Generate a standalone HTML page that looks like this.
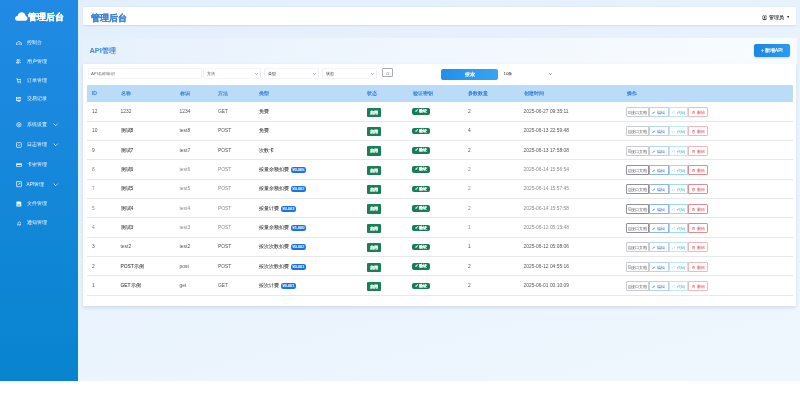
<!DOCTYPE html>
<html><head><meta charset="utf-8">
<style>
*{box-sizing:border-box;margin:0;padding:0}
html,body{width:800px;height:407px;overflow:hidden;background:#fff;font-family:"Liberation Sans",sans-serif;color:#333}
#app{will-change:transform;position:absolute;left:0;top:0;width:800px;height:381px;background:linear-gradient(165deg,#e2eefb 0%,#e9f3fd 50%,#eff7fe 100%)}
#side{position:absolute;left:0;top:0;width:78px;height:381px;background:linear-gradient(180deg,#218ae4,#0884cf)}
.logo{position:absolute;left:14px;top:11px;color:#fff;font-weight:bold;-webkit-text-stroke:.25px #fff;font-size:8.6px;line-height:12px;white-space:nowrap}
.logo svg{position:absolute;left:1px;top:1px}
.logo span{position:absolute;left:13.8px;top:-.3px}
.mi{position:absolute;left:15px;height:10px;color:rgba(255,255,255,.95);font-size:4.8px;line-height:10px;white-space:nowrap}
.mi svg{position:absolute;left:0;top:2px}
.mi span{position:absolute;left:11.5px;top:0}
.mi .chev{position:absolute;left:38.4px;top:3.4px}
#hdr{position:absolute;left:83px;top:6.8px;width:713px;height:18px;background:#fff;border-radius:1px;box-shadow:0 .5px 1.5px rgba(30,80,160,.12)}
#hdr .t{position:absolute;left:8px;top:4.8px;font-size:9px;line-height:12px;font-weight:bold;color:#3f84dc;-webkit-text-stroke:.2px #3f84dc;white-space:nowrap}
#hdr .u{position:absolute;left:686px;top:6.9px;font-size:4.9px;line-height:8px;color:#444;-webkit-text-stroke:.15px #555;white-space:nowrap}
#card{position:absolute;left:82px;top:38px;width:715px;height:268px;}
#card .cb{position:absolute;left:.7px;top:25.7px;width:713.6px;height:242.2px;background:#fff;border-radius:0 0 1px 1px;box-shadow:0 1.5px 3.5px rgba(40,70,120,.13)}
#card .ch{position:absolute;left:0;top:0;width:715px;height:25.7px;background:linear-gradient(90deg,rgba(240,248,255,.2),rgba(255,255,255,.75));border-radius:2px 2px 0 0}
#card .ch .t{position:absolute;left:7.4px;top:8px;font-size:7.45px;line-height:10px;font-weight:bold;color:#4588dc;white-space:nowrap}
.addbtn{position:absolute;left:671.6px;top:6.2px;width:36.5px;height:12.4px;padding-top:.8px;border-radius:2px;background:linear-gradient(90deg,#1d86e0,#2a9bf0);box-shadow:0 1px 2px rgba(33,150,243,.3);color:#fff;-webkit-text-stroke:.15px #fff;font-size:4.7px;line-height:11.6px;text-align:center;white-space:nowrap}
.fi{position:absolute;top:30px;height:11px;border:.5px solid #eef0f3;border-top-color:#f5f6f8;border-bottom-color:#f5f6f8;border-radius:1.5px;background:#fff;font-size:4.4px;line-height:10px;color:#333;padding-left:2.5px;white-space:nowrap}
.fi .car{position:absolute;right:2.2px;top:4.2px;width:3px;height:2px}
.sbtn{position:absolute;left:359px;top:30.6px;width:57px;height:11.2px;border-radius:2px;background:linear-gradient(90deg,#2290e8,#38a4f1);color:#fff;-webkit-text-stroke:.15px #fff;font-size:4.6px;line-height:11px;text-align:center}
#tbl{position:absolute;left:5px;top:47px;width:705.5px}
.th{position:absolute;left:0;top:0;width:705.5px;height:17px;background:#bbdcf9;border-radius:1px 1px 0 0}
.th span{position:absolute;top:4.8px;font-size:4.9px;line-height:8px;color:#1f74d0;-webkit-text-stroke:.12px #1f74d0;white-space:nowrap}
.row{position:absolute;left:0;width:705.5px;height:19.35px;border-bottom:.6px solid #e6e8ea}
.row span{position:absolute;top:5.5px;font-size:4.9px;line-height:8px;color:#333;white-space:nowrap}
.row span{color:#2a2a2a;-webkit-text-stroke:.04px #333}
.row span.l{color:#555;-webkit-text-stroke:0}
.row.g span.l{color:#8a8a8a}
.st{position:absolute;left:280px;top:5.4px;width:14.2px;height:9.1px;background:#187f56;border-radius:1px;color:#fff;-webkit-text-stroke:.1px #fff;font-size:4.3px;line-height:9.1px;text-align:center}
.kp{position:absolute;left:325.2px;top:6.1px;width:17.4px;height:6.5px;background:#177d54;border-radius:2px;color:#fff;-webkit-text-stroke:.1px #fff;font-size:3.5px;line-height:6.5px;text-align:center}
.pr{display:inline-block;margin-left:1.6px;padding:0 1.9px;height:6px;line-height:6px;background:#1a74e8;border-radius:2.2px;color:#fff;-webkit-text-stroke:.12px #fff;font-size:3.9px;vertical-align:top;position:relative;top:1px}
.acts{position:absolute;left:539px;top:4.7px;height:10px;white-space:nowrap;font-size:0}
.ab{display:inline-block;font-style:normal;height:10px;border:.5px solid;font-size:4.3px;line-height:9px;text-align:center;vertical-align:top}
.ab1{width:23px;border-color:#c9ccd0;color:#555;border-radius:1px 0 0 1px}
.ab2{width:19.5px;border-color:#b9d3f2;color:#2b72d4}
.ab3{width:19.8px;border-color:#bfe9f3;color:#2ab3d3}
.ab4{width:20.2px;border-color:#f1b9bd;color:#d63b48;border-radius:0 1px 1px 0}
.pr{font-style:normal}
.row.g .ab1{border-color:#8e9297}
.row.g .ab2{border-color:#8fb6ea}
.row.g .ab3{border-color:#9fdcec}
.row.g .ab4{border-color:#e48a92}
.ab svg{vertical-align:middle;position:relative;top:-.3px;margin-right:.3px}
</style></head><body>
<div id="app">
<div id="side">
 <div class="logo"><svg width="12.5" height="9" viewBox="0 0 25 18"><path d="M5 17.5 C1.5 17.5 0 15 0 12.5 C0 9.5 2.5 7.5 5 7.8 C6 3 10 0.5 13.5 0.5 C18 0.5 21 4 21.2 8 C23.5 8.5 25 10.5 25 13 C25 15.5 23 17.5 20.5 17.5 Z" fill="#fff"/></svg><span>管理后台</span></div>
<div class="mi" style="top:38.0px"><svg style="left:0.8px;top:2.70px" width="6" height="4.6" viewBox="0 0 12 9.2"><path d="M1.8 8.4 A4.8 4.8 0 1 1 10.2 8.4 Z" fill="none" stroke="#fff" stroke-width="1.5"/><path d="M6 7 L8 4.2" stroke="#fff" stroke-width="1.4"/></svg><span>控制台</span></div>
<div class="mi" style="top:56.6px"><svg style="left:0.7px;top:2.90px" width="5" height="4.2" viewBox="0 0 10 8.4"><circle cx="3.5" cy="2.4" r="1.8" fill="none" stroke="#fff" stroke-width="1.6"/><path d="M.8 8 C.8 5 6.2 5 6.2 8 Z" fill="none" stroke="#fff" stroke-width="1.6"/><path d="M6.8 .6 A1.8 1.8 0 0 1 6.8 4 M8 5.2 C9.2 5.8 9.4 7 9.4 8" fill="none" stroke="#fff" stroke-width="1.5"/></svg><span>用户管理</span></div>
<div class="mi" style="top:75.8px"><svg style="left:0.9px;top:2.20px" width="5.4" height="5.6" viewBox="0 0 11 11"><path d="M.8 1 H2.5 L3.5 7.5 H9.5 L10.3 2.8 H2.8" fill="none" stroke="#fff" stroke-width="1.4"/><circle cx="4.2" cy="9.6" r="1.1" fill="#fff"/><circle cx="8.8" cy="9.6" r="1.1" fill="#fff"/></svg><span>订单管理</span></div>
<div class="mi" style="top:94.3px"><svg style="left:0.9px;top:2.50px" width="5.6" height="5" viewBox="0 0 11 10"><rect x=".8" y=".8" width="9.4" height="6" fill="none" stroke="#fff" stroke-width="1.4"/><path d="M.8 3.5 H10.2" stroke="#fff" stroke-width="1.3"/><path d="M4 6.8 V9.3 H7 V6.8" fill="none" stroke="#fff" stroke-width="1.3"/></svg><span>交易记录</span></div>
<div class="mi" style="top:120.1px"><svg style="left:0.8px;top:2.30px" width="5.8" height="5.4" viewBox="0 0 12 11"><circle cx="6" cy="5.5" r="4.6" fill="none" stroke="#fff" stroke-width="1.3"/><circle cx="6" cy="5.5" r="1.8" fill="none" stroke="#fff" stroke-width="1.3"/></svg><span>系统设置</span><svg class="chev" width="5.4" height="3.4" viewBox="0 0 12 7.5"><path d="M1.2 1.2 L6 6 L10.8 1.2" fill="none" stroke="#fff" stroke-width="1.4"/></svg></div>
<div class="mi" style="top:139.8px"><svg style="left:0.8px;top:2.00px" width="5.8" height="6" viewBox="0 0 12 12"><rect x="1" y="1" width="10" height="10" rx="1.5" fill="none" stroke="#fff" stroke-width="1.4"/><path d="M3.5 5 L6 7.5 L8.5 5" fill="none" stroke="#fff" stroke-width="1.3"/></svg><span>日志管理</span><svg class="chev" width="5.4" height="3.4" viewBox="0 0 12 7.5"><path d="M1.2 1.2 L6 6 L10.8 1.2" fill="none" stroke="#fff" stroke-width="1.4"/></svg></div>
<div class="mi" style="top:159.9px"><svg style="left:0.8px;top:3.00px" width="6" height="4" viewBox="0 0 12 8"><rect x=".8" y=".8" width="10.4" height="6.4" rx=".8" fill="none" stroke="#fff" stroke-width="1.4"/><path d="M.8 3 H11.2" stroke="#fff" stroke-width="1.8"/></svg><span>卡密管理</span></div>
<div class="mi" style="top:179.6px"><svg style="left:0.8px;top:1.90px" width="6" height="6.2" viewBox="0 0 12 12.4"><rect x="1" y="1" width="10" height="10.4" rx=".8" fill="none" stroke="#fff" stroke-width="1.3"/><path d="M3.5 8.5 L8 4 M5 4 H8 V7" fill="none" stroke="#fff" stroke-width="1.1"/></svg><span>API管理</span><svg class="chev" width="5.4" height="3.4" viewBox="0 0 12 7.5"><path d="M1.2 1.2 L6 6 L10.8 1.2" fill="none" stroke="#fff" stroke-width="1.4"/></svg></div>
<div class="mi" style="top:199.0px"><svg style="left:0.8px;top:2.00px" width="5.8" height="6" viewBox="0 0 12 12"><path d="M1 1 H9 L11 3 V11 H1 Z" fill="#fff"/><path d="M3 7 H9 M3 9 H9" stroke="#2a8fe0" stroke-width="1.1"/></svg><span>文件管理</span></div>
<div class="mi" style="top:218.2px"><svg style="left:1.5px;top:2.40px" width="4.8" height="5.2" viewBox="0 0 10 11"><path d="M2 8 V5 A3 3 0 0 1 8 5 V8 H9 H1 Z" fill="none" stroke="#fff" stroke-width="1.3"/><path d="M4 10.2 H6" stroke="#fff" stroke-width="1.3"/></svg><span>通知管理</span></div>
</div>
<div id="hdr"><div class="t">管理后台</div><svg style="position:absolute;left:679.3px;top:7.9px" width="5.2" height="5.2" viewBox="0 0 10 10"><circle cx="5" cy="5" r="4.6" fill="#fff" stroke="#222" stroke-width=".9"/><circle cx="5" cy="3.9" r="1.7" fill="#222"/><path d="M1.8 8.2 C2.5 6.3 7.5 6.3 8.2 8.2 C7 9.6 3 9.6 1.8 8.2Z" fill="#222"/></svg><div class="u">管理员</div><svg style="position:absolute;left:703.6px;top:9.3px" width="2.6" height="2" viewBox="0 0 4 3"><path d="M0 0H4L2 3Z" fill="#333"/></svg></div>
<div id="card">
 <div class="cb"></div>
 <div class="ch"><div class="t">API管理</div><div class="addbtn">+ 新增API</div></div>
 <div class="fi" style="left:5.5px;width:114.5px;border-color:#f3f4f6;color:#666;font-size:4.3px">API名称/标识</div>
 <div class="fi" style="left:121px;width:58px">方法<svg class="car" viewBox="0 0 6 4"><path d="M.6 .6 L3 3 L5.4 .6" fill="none" stroke="#444" stroke-width="1"/></svg></div>
 <div class="fi" style="left:182px;width:55px">类型<svg class="car" viewBox="0 0 6 4"><path d="M.6 .6 L3 3 L5.4 .6" fill="none" stroke="#444" stroke-width="1"/></svg></div>
 <div class="fi" style="left:240px;width:55px">状态<svg class="car" viewBox="0 0 6 4"><path d="M.6 .6 L3 3 L5.4 .6" fill="none" stroke="#444" stroke-width="1"/></svg></div>
 <div class="fi" style="left:299.8px;width:10.8px;top:30.3px;height:9.2px;border-color:#a9acb0;border-radius:1px"><svg style="position:absolute;left:3px;top:2.6px" width="3.6" height="3.6" viewBox="0 0 8 8"><circle cx="4" cy="4" r="2.8" fill="none" stroke="#777" stroke-width="1"/></svg></div>
 <div class="sbtn">搜索</div>
 <div class="fi" style="left:418px;width:55px;border-color:#fff;color:#333">10条<svg class="car" style="right:2px" viewBox="0 0 6 4"><path d="M.6 .6 L3 3 L5.4 .6" fill="none" stroke="#444" stroke-width="1"/></svg></div>
 <div id="tbl">
  <div class="th"><span style="left:5px">ID</span><span style="left:33.5px">名称</span><span style="left:92.5px">标识</span><span style="left:131px">方法</span><span style="left:172px">类型</span><span style="left:280px">状态</span><span style="left:325.5px">验证密钥</span><span style="left:381px">参数数量</span><span style="left:436.5px">创建时间</span><span style="left:540px">操作</span></div>
<div class="row" style="top:17.35px"><span class="l" style="left:5px">12</span><span class="l" style="left:33.5px">1232</span><span class="l" style="left:92.5px">1234</span><span class="l" style="left:131px">GET</span><span style="left:172px">免费</span><b class="st">启用</b><b class="kp">✓ 验证</b><span class="l" style="left:381px">2</span><span class="l" style="left:436.5px">2025-06-27 09:35:11</span><div class="acts"><i class="ab ab1"><svg width="3.6" height="3.8" viewBox="0 0 8 8.4"><path d="M1 1 H5.5 L7 2.5 V7.4 H1 Z" fill="none" stroke="#666" stroke-width=".9"/><path d="M2.5 4 H5.5 M2.5 5.8 H5.5" stroke="#666" stroke-width=".7"/></svg>接口文档</i><i class="ab ab2"><svg width="3.4" height="3.4" viewBox="0 0 8 8"><path d="M1 7 L1.3 5.6 L5.8 1.1 L6.9 2.2 L2.4 6.7 Z" fill="#2b72d4"/></svg> 编辑</i><i class="ab ab3"><svg width="3.6" height="2.8" viewBox="0 0 9 7"><path d="M3 1 L1 3.5 L3 6 M6 1 L8 3.5 L6 6" fill="none" stroke="#2ab3d3" stroke-width=".9"/></svg> 代码</i><i class="ab ab4"><svg width="3" height="3.4" viewBox="0 0 7 8"><path d="M.5 1.8 H6.5 M2.5 1.8 V.8 H4.5 V1.8 M1.3 2.6 H5.7 L5.3 7.4 H1.7 Z" fill="none" stroke="#d63b48" stroke-width=".9"/></svg> 删除</i></div></div>
<div class="row" style="top:36.70px"><span class="l" style="left:5px">10</span><span style="left:33.5px">测试8</span><span class="l" style="left:92.5px">test8</span><span class="l" style="left:131px">POST</span><span style="left:172px">免费</span><b class="st">启用</b><b class="kp">✓ 验证</b><span class="l" style="left:381px">4</span><span class="l" style="left:436.5px">2025-06-13 22:59:48</span><div class="acts"><i class="ab ab1"><svg width="3.6" height="3.8" viewBox="0 0 8 8.4"><path d="M1 1 H5.5 L7 2.5 V7.4 H1 Z" fill="none" stroke="#666" stroke-width=".9"/><path d="M2.5 4 H5.5 M2.5 5.8 H5.5" stroke="#666" stroke-width=".7"/></svg>接口文档</i><i class="ab ab2"><svg width="3.4" height="3.4" viewBox="0 0 8 8"><path d="M1 7 L1.3 5.6 L5.8 1.1 L6.9 2.2 L2.4 6.7 Z" fill="#2b72d4"/></svg> 编辑</i><i class="ab ab3"><svg width="3.6" height="2.8" viewBox="0 0 9 7"><path d="M3 1 L1 3.5 L3 6 M6 1 L8 3.5 L6 6" fill="none" stroke="#2ab3d3" stroke-width=".9"/></svg> 代码</i><i class="ab ab4"><svg width="3" height="3.4" viewBox="0 0 7 8"><path d="M.5 1.8 H6.5 M2.5 1.8 V.8 H4.5 V1.8 M1.3 2.6 H5.7 L5.3 7.4 H1.7 Z" fill="none" stroke="#d63b48" stroke-width=".9"/></svg> 删除</i></div></div>
<div class="row" style="top:56.05px"><span class="l" style="left:5px">9</span><span style="left:33.5px">测试7</span><span class="l" style="left:92.5px">test7</span><span class="l" style="left:131px">POST</span><span style="left:172px">次数卡</span><b class="st">启用</b><b class="kp">✓ 验证</b><span class="l" style="left:381px">2</span><span class="l" style="left:436.5px">2025-06-13 17:58:08</span><div class="acts"><i class="ab ab1"><svg width="3.6" height="3.8" viewBox="0 0 8 8.4"><path d="M1 1 H5.5 L7 2.5 V7.4 H1 Z" fill="none" stroke="#666" stroke-width=".9"/><path d="M2.5 4 H5.5 M2.5 5.8 H5.5" stroke="#666" stroke-width=".7"/></svg>接口文档</i><i class="ab ab2"><svg width="3.4" height="3.4" viewBox="0 0 8 8"><path d="M1 7 L1.3 5.6 L5.8 1.1 L6.9 2.2 L2.4 6.7 Z" fill="#2b72d4"/></svg> 编辑</i><i class="ab ab3"><svg width="3.6" height="2.8" viewBox="0 0 9 7"><path d="M3 1 L1 3.5 L3 6 M6 1 L8 3.5 L6 6" fill="none" stroke="#2ab3d3" stroke-width=".9"/></svg> 代码</i><i class="ab ab4"><svg width="3" height="3.4" viewBox="0 0 7 8"><path d="M.5 1.8 H6.5 M2.5 1.8 V.8 H4.5 V1.8 M1.3 2.6 H5.7 L5.3 7.4 H1.7 Z" fill="none" stroke="#d63b48" stroke-width=".9"/></svg> 删除</i></div></div>
<div class="row g" style="top:75.40px"><span class="l" style="left:5px">8</span><span style="left:33.5px">测试6</span><span class="l" style="left:92.5px">test6</span><span class="l" style="left:131px">POST</span><span style="left:172px">按量余额扣费<i class="pr">¥0.005</i></span><b class="st">启用</b><b class="kp">✓ 验证</b><span class="l" style="left:381px">2</span><span class="l" style="left:436.5px">2025-06-14 15:56:54</span><div class="acts"><i class="ab ab1"><svg width="3.6" height="3.8" viewBox="0 0 8 8.4"><path d="M1 1 H5.5 L7 2.5 V7.4 H1 Z" fill="none" stroke="#666" stroke-width=".9"/><path d="M2.5 4 H5.5 M2.5 5.8 H5.5" stroke="#666" stroke-width=".7"/></svg>接口文档</i><i class="ab ab2"><svg width="3.4" height="3.4" viewBox="0 0 8 8"><path d="M1 7 L1.3 5.6 L5.8 1.1 L6.9 2.2 L2.4 6.7 Z" fill="#2b72d4"/></svg> 编辑</i><i class="ab ab3"><svg width="3.6" height="2.8" viewBox="0 0 9 7"><path d="M3 1 L1 3.5 L3 6 M6 1 L8 3.5 L6 6" fill="none" stroke="#2ab3d3" stroke-width=".9"/></svg> 代码</i><i class="ab ab4"><svg width="3" height="3.4" viewBox="0 0 7 8"><path d="M.5 1.8 H6.5 M2.5 1.8 V.8 H4.5 V1.8 M1.3 2.6 H5.7 L5.3 7.4 H1.7 Z" fill="none" stroke="#d63b48" stroke-width=".9"/></svg> 删除</i></div></div>
<div class="row g" style="top:94.75px"><span class="l" style="left:5px">7</span><span style="left:33.5px">测试5</span><span class="l" style="left:92.5px">test5</span><span class="l" style="left:131px">POST</span><span style="left:172px">按量余额扣费<i class="pr">¥0.002</i></span><b class="st">启用</b><b class="kp">✓ 验证</b><span class="l" style="left:381px">2</span><span class="l" style="left:436.5px">2025-06-14 15:57:45</span><div class="acts"><i class="ab ab1"><svg width="3.6" height="3.8" viewBox="0 0 8 8.4"><path d="M1 1 H5.5 L7 2.5 V7.4 H1 Z" fill="none" stroke="#666" stroke-width=".9"/><path d="M2.5 4 H5.5 M2.5 5.8 H5.5" stroke="#666" stroke-width=".7"/></svg>接口文档</i><i class="ab ab2"><svg width="3.4" height="3.4" viewBox="0 0 8 8"><path d="M1 7 L1.3 5.6 L5.8 1.1 L6.9 2.2 L2.4 6.7 Z" fill="#2b72d4"/></svg> 编辑</i><i class="ab ab3"><svg width="3.6" height="2.8" viewBox="0 0 9 7"><path d="M3 1 L1 3.5 L3 6 M6 1 L8 3.5 L6 6" fill="none" stroke="#2ab3d3" stroke-width=".9"/></svg> 代码</i><i class="ab ab4"><svg width="3" height="3.4" viewBox="0 0 7 8"><path d="M.5 1.8 H6.5 M2.5 1.8 V.8 H4.5 V1.8 M1.3 2.6 H5.7 L5.3 7.4 H1.7 Z" fill="none" stroke="#d63b48" stroke-width=".9"/></svg> 删除</i></div></div>
<div class="row g" style="top:114.10px"><span class="l" style="left:5px">5</span><span style="left:33.5px">测试4</span><span class="l" style="left:92.5px">test4</span><span class="l" style="left:131px">POST</span><span style="left:172px">按量计费<i class="pr">¥0.003</i></span><b class="st">启用</b><b class="kp">✓ 验证</b><span class="l" style="left:381px">2</span><span class="l" style="left:436.5px">2025-06-14 15:57:58</span><div class="acts"><i class="ab ab1"><svg width="3.6" height="3.8" viewBox="0 0 8 8.4"><path d="M1 1 H5.5 L7 2.5 V7.4 H1 Z" fill="none" stroke="#666" stroke-width=".9"/><path d="M2.5 4 H5.5 M2.5 5.8 H5.5" stroke="#666" stroke-width=".7"/></svg>接口文档</i><i class="ab ab2"><svg width="3.4" height="3.4" viewBox="0 0 8 8"><path d="M1 7 L1.3 5.6 L5.8 1.1 L6.9 2.2 L2.4 6.7 Z" fill="#2b72d4"/></svg> 编辑</i><i class="ab ab3"><svg width="3.6" height="2.8" viewBox="0 0 9 7"><path d="M3 1 L1 3.5 L3 6 M6 1 L8 3.5 L6 6" fill="none" stroke="#2ab3d3" stroke-width=".9"/></svg> 代码</i><i class="ab ab4"><svg width="3" height="3.4" viewBox="0 0 7 8"><path d="M.5 1.8 H6.5 M2.5 1.8 V.8 H4.5 V1.8 M1.3 2.6 H5.7 L5.3 7.4 H1.7 Z" fill="none" stroke="#d63b48" stroke-width=".9"/></svg> 删除</i></div></div>
<div class="row g" style="top:133.45px"><span class="l" style="left:5px">4</span><span style="left:33.5px">测试3</span><span class="l" style="left:92.5px">test3</span><span class="l" style="left:131px">POST</span><span style="left:172px">按量余额扣费<i class="pr">¥1.000</i></span><b class="st">启用</b><b class="kp">✓ 验证</b><span class="l" style="left:381px">1</span><span class="l" style="left:436.5px">2025-06-12 05:15:48</span><div class="acts"><i class="ab ab1"><svg width="3.6" height="3.8" viewBox="0 0 8 8.4"><path d="M1 1 H5.5 L7 2.5 V7.4 H1 Z" fill="none" stroke="#666" stroke-width=".9"/><path d="M2.5 4 H5.5 M2.5 5.8 H5.5" stroke="#666" stroke-width=".7"/></svg>接口文档</i><i class="ab ab2"><svg width="3.4" height="3.4" viewBox="0 0 8 8"><path d="M1 7 L1.3 5.6 L5.8 1.1 L6.9 2.2 L2.4 6.7 Z" fill="#2b72d4"/></svg> 编辑</i><i class="ab ab3"><svg width="3.6" height="2.8" viewBox="0 0 9 7"><path d="M3 1 L1 3.5 L3 6 M6 1 L8 3.5 L6 6" fill="none" stroke="#2ab3d3" stroke-width=".9"/></svg> 代码</i><i class="ab ab4"><svg width="3" height="3.4" viewBox="0 0 7 8"><path d="M.5 1.8 H6.5 M2.5 1.8 V.8 H4.5 V1.8 M1.3 2.6 H5.7 L5.3 7.4 H1.7 Z" fill="none" stroke="#d63b48" stroke-width=".9"/></svg> 删除</i></div></div>
<div class="row" style="top:152.80px"><span class="l" style="left:5px">3</span><span class="l" style="left:33.5px">test2</span><span class="l" style="left:92.5px">test2</span><span class="l" style="left:131px">POST</span><span style="left:172px">按次次数扣费<i class="pr">¥0.002</i></span><b class="st">启用</b><b class="kp">✓ 验证</b><span class="l" style="left:381px">1</span><span class="l" style="left:436.5px">2025-06-12 05:08:06</span><div class="acts"><i class="ab ab1"><svg width="3.6" height="3.8" viewBox="0 0 8 8.4"><path d="M1 1 H5.5 L7 2.5 V7.4 H1 Z" fill="none" stroke="#666" stroke-width=".9"/><path d="M2.5 4 H5.5 M2.5 5.8 H5.5" stroke="#666" stroke-width=".7"/></svg>接口文档</i><i class="ab ab2"><svg width="3.4" height="3.4" viewBox="0 0 8 8"><path d="M1 7 L1.3 5.6 L5.8 1.1 L6.9 2.2 L2.4 6.7 Z" fill="#2b72d4"/></svg> 编辑</i><i class="ab ab3"><svg width="3.6" height="2.8" viewBox="0 0 9 7"><path d="M3 1 L1 3.5 L3 6 M6 1 L8 3.5 L6 6" fill="none" stroke="#2ab3d3" stroke-width=".9"/></svg> 代码</i><i class="ab ab4"><svg width="3" height="3.4" viewBox="0 0 7 8"><path d="M.5 1.8 H6.5 M2.5 1.8 V.8 H4.5 V1.8 M1.3 2.6 H5.7 L5.3 7.4 H1.7 Z" fill="none" stroke="#d63b48" stroke-width=".9"/></svg> 删除</i></div></div>
<div class="row" style="top:172.15px"><span class="l" style="left:5px">2</span><span style="left:33.5px">POST示例</span><span class="l" style="left:92.5px">post</span><span class="l" style="left:131px">POST</span><span style="left:172px">按次次数扣费<i class="pr">¥0.001</i></span><b class="st">启用</b><b class="kp">✓ 验证</b><span class="l" style="left:381px">2</span><span class="l" style="left:436.5px">2025-06-12 04:55:16</span><div class="acts"><i class="ab ab1"><svg width="3.6" height="3.8" viewBox="0 0 8 8.4"><path d="M1 1 H5.5 L7 2.5 V7.4 H1 Z" fill="none" stroke="#666" stroke-width=".9"/><path d="M2.5 4 H5.5 M2.5 5.8 H5.5" stroke="#666" stroke-width=".7"/></svg>接口文档</i><i class="ab ab2"><svg width="3.4" height="3.4" viewBox="0 0 8 8"><path d="M1 7 L1.3 5.6 L5.8 1.1 L6.9 2.2 L2.4 6.7 Z" fill="#2b72d4"/></svg> 编辑</i><i class="ab ab3"><svg width="3.6" height="2.8" viewBox="0 0 9 7"><path d="M3 1 L1 3.5 L3 6 M6 1 L8 3.5 L6 6" fill="none" stroke="#2ab3d3" stroke-width=".9"/></svg> 代码</i><i class="ab ab4"><svg width="3" height="3.4" viewBox="0 0 7 8"><path d="M.5 1.8 H6.5 M2.5 1.8 V.8 H4.5 V1.8 M1.3 2.6 H5.7 L5.3 7.4 H1.7 Z" fill="none" stroke="#d63b48" stroke-width=".9"/></svg> 删除</i></div></div>
<div class="row" style="top:191.50px"><span class="l" style="left:5px">1</span><span style="left:33.5px">GET示例</span><span class="l" style="left:92.5px">get</span><span class="l" style="left:131px">GET</span><span style="left:172px">按次计费<i class="pr">¥0.001</i></span><b class="st">启用</b><b class="kp">✓ 验证</b><span class="l" style="left:381px">2</span><span class="l" style="left:436.5px">2025-06-01 00:10:09</span><div class="acts"><i class="ab ab1"><svg width="3.6" height="3.8" viewBox="0 0 8 8.4"><path d="M1 1 H5.5 L7 2.5 V7.4 H1 Z" fill="none" stroke="#666" stroke-width=".9"/><path d="M2.5 4 H5.5 M2.5 5.8 H5.5" stroke="#666" stroke-width=".7"/></svg>接口文档</i><i class="ab ab2"><svg width="3.4" height="3.4" viewBox="0 0 8 8"><path d="M1 7 L1.3 5.6 L5.8 1.1 L6.9 2.2 L2.4 6.7 Z" fill="#2b72d4"/></svg> 编辑</i><i class="ab ab3"><svg width="3.6" height="2.8" viewBox="0 0 9 7"><path d="M3 1 L1 3.5 L3 6 M6 1 L8 3.5 L6 6" fill="none" stroke="#2ab3d3" stroke-width=".9"/></svg> 代码</i><i class="ab ab4"><svg width="3" height="3.4" viewBox="0 0 7 8"><path d="M.5 1.8 H6.5 M2.5 1.8 V.8 H4.5 V1.8 M1.3 2.6 H5.7 L5.3 7.4 H1.7 Z" fill="none" stroke="#d63b48" stroke-width=".9"/></svg> 删除</i></div></div>
 </div>
</div>
</div>
</body></html>
